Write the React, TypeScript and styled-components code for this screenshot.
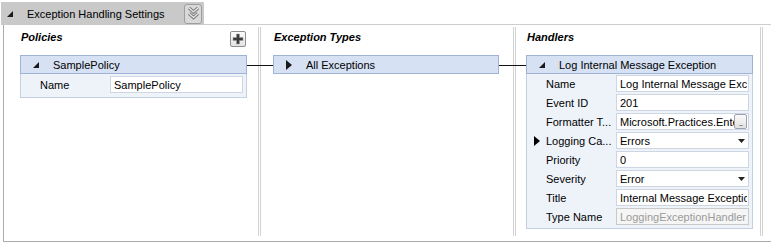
import type { FC, ReactNode } from 'react'
import styled, { createGlobalStyle } from 'styled-components'

const GlobalStyle = createGlobalStyle`
  html, body { margin: 0; padding: 0; background: #fff; }
  body {
    font-family: "Liberation Sans", Arial, sans-serif;
    font-size: 11px;
    color: #000;
  }
  * { box-sizing: border-box; }
`

interface HandlerRow {
  label: string
  value: string
  kind?: 'text' | 'combo' | 'picker' | 'readonly'
  selected?: boolean
}

const handlerRows: HandlerRow[] = [
  { label: 'Name', value: 'Log Internal Message Exception' },
  { label: 'Event ID', value: '201' },
  { label: 'Formatter T...', value: 'Microsoft.Practices.EnterpriseLibrary', kind: 'picker' },
  { label: 'Logging Ca...', value: 'Errors', kind: 'combo', selected: true },
  { label: 'Priority', value: '0' },
  { label: 'Severity', value: 'Error', kind: 'combo' },
  { label: 'Title', value: 'Internal Message Exception' },
  { label: 'Type Name', value: 'LoggingExceptionHandler', kind: 'readonly' },
]

const App: FC = () => {
  return (
    <Frame>
      <GlobalStyle />
      <TabStrip>
        <Tab>
          <ExpandedGlyph />
          <TabTitle>Exception Handling Settings</TabTitle>
          <ChevronButton>
            <svg width="13" height="15" viewBox="0 0 13 15">
              <path d="M2 2 L6.5 6 L11 2 M2 7.5 L6.5 11.5 L11 7.5" fill="none" stroke="#7c7c7c" strokeWidth="3.2" strokeLinejoin="miter" />
              <path d="M2 2 L6.5 6 L11 2 M2 7.5 L6.5 11.5 L11 7.5" fill="none" stroke="#ececec" strokeWidth="1.2" />
            </svg>
          </ChevronButton>
        </Tab>
        <TabRule />
      </TabStrip>

      <Panel>
        <Column $left={16} $right={11}>
          <ColumnHead>
            <span>Policies</span>
            <PlusButton>
              <svg width="12" height="12" viewBox="0 0 12 12">
                <path d="M4.5 1 H7.5 V4.5 H11 V7.5 H7.5 V11 H4.5 V7.5 H1 V4.5 H4.5 Z" fill="#3a3a3a" stroke="#9a9a9a" strokeWidth="0.6" />
              </svg>
            </PlusButton>
          </ColumnHead>
          <Card $link={26}>
            <CardHeader>
              <GlyphSlot><ExpandedGlyph /></GlyphSlot>
              SamplePolicy
            </CardHeader>
            <CardBody>
              <PropRow $h={21}>
                <PropLabel>
                  <MarkerSlot />
                  Name
                </PropLabel>
                <Field>SamplePolicy</Field>
              </PropRow>
            </CardBody>
          </Card>
        </Column>

        <Column $left={12} $right={14}>
          <ColumnHead>
            <span>Exception Types</span>
          </ColumnHead>
          <Card $link={27}>
            <CardHeader>
              <GlyphSlot><CollapsedGlyph /></GlyphSlot>
              All Exceptions
            </CardHeader>
          </Card>
        </Column>

        <Column $left={10} $right={7}>
          <ColumnHead>
            <span>Handlers</span>
          </ColumnHead>
          <Card>
            <CardHeader>
              <GlyphSlot><ExpandedGlyph /></GlyphSlot>
              Log Internal Message Exception
            </CardHeader>
            <CardBody>
              {handlerRows.map((row) => (
                <PropRow key={row.label} $h={19}>
                  <PropLabel>
                    <MarkerSlot>{row.selected && <RowMarker />}</MarkerSlot>
                    {row.label}
                  </PropLabel>
                  <HandlerField row={row} />
                </PropRow>
              ))}
            </CardBody>
          </Card>
        </Column>
      </Panel>
    </Frame>
  )
}

const HandlerField: FC<{ row: HandlerRow }> = ({ row }) => {
  let extra: ReactNode = null
  if (row.kind === 'combo') extra = <DropArrow />
  if (row.kind === 'picker') extra = <DotsButton>...</DotsButton>

  return (
    <Field $readonly={row.kind === 'readonly'}>
      <FieldText>{row.value}</FieldText>
      {extra}
    </Field>
  )
}

const ExpandedGlyph: FC = () => (
  <svg width="6" height="6" viewBox="0 0 6 6" style={{ display: 'block' }}>
    <polygon points="6,0 6,6 0,6" fill="#1a1a1a" />
  </svg>
)

const CollapsedGlyph: FC = () => (
  <svg width="6" height="10" viewBox="0 0 6 10" style={{ display: 'block' }}>
    <polygon points="0,0 6,5 0,10" fill="#1a1a1a" />
  </svg>
)

const RowMarker: FC = () => (
  <svg width="6" height="10" viewBox="0 0 6 10" style={{ display: 'block' }}>
    <polygon points="0,0 6,5 0,10" fill="#000" />
  </svg>
)

const DropArrow: FC = () => (
  <svg width="7" height="4" viewBox="0 0 7 4" style={{ display: 'block', marginRight: 2, flexShrink: 0 }}>
    <polygon points="0,0 7,0 3.5,4" fill="#222" />
  </svg>
)

const Frame = styled.div`
  width: 771px;
  height: 245px;
  padding-top: 2px;
  overflow: hidden;
`

const TabStrip = styled.div`
  display: flex;
  height: 23px;
`

const Tab = styled.div`
  width: 203px;
  margin-left: 1px;
  background: #c9c9c9;
  display: flex;
  align-items: center;
  padding-left: 6px;
`

const TabTitle = styled.span`
  margin-left: 14px;
  font-size: 11px;
`

const ChevronButton = styled.div`
  margin-left: auto;
  margin-right: 2px;
  width: 18px;
  height: 20px;
  border: 1px solid #9d9d9d;
  border-radius: 3px;
  background: #d9d9d9;
  display: flex;
  align-items: center;
  justify-content: center;
`

const TabRule = styled.div`
  flex: 1;
  border-bottom: 1px solid #cdcdcd;
`

const Panel = styled.div`
  margin-left: 3px;
  height: 217px;
  border-left: 1px solid #ababab;
  border-bottom: 1px solid #ababab;
  display: grid;
  grid-template-columns: 257px 255px 247px;
`

const Column = styled.div<{ $left: number; $right: number }>`
  margin: 2px 0 5px;
  padding: 0 ${(p) => p.$right}px 0 ${(p) => p.$left}px;
  border-right: 3px double #d2d2d2;
  display: flex;
  flex-direction: column;
`

const ColumnHead = styled.div`
  height: 28px;
  padding: 3px 0 0 1px;
  display: flex;
  justify-content: space-between;
  align-items: flex-start;
  line-height: 14px;
  font-weight: bold;
  font-style: italic;
`

const PlusButton = styled.div`
  margin-top: 1px;
  margin-right: 1px;
  width: 16px;
  height: 16px;
  border: 1px solid #8e8e8e;
  border-radius: 2px;
  background: linear-gradient(#fbfbfb, #e4e4e4);
  display: flex;
  align-items: center;
  justify-content: center;
`

const Card = styled.div<{ $link?: number }>`
  position: relative;
  &::after {
    content: "";
    display: ${(p) => (p.$link ? 'block' : 'none')};
    position: absolute;
    left: 100%;
    top: 10px;
    width: ${(p) => p.$link ?? 0}px;
    height: 1px;
    background: #111;
    z-index: 2;
  }
`

const CardHeader = styled.div`
  height: 19px;
  padding-left: 12px;
  border: 1px solid #9fb4d5;
  background: #d6e2f3;
  display: flex;
  align-items: center;
  white-space: nowrap;
`

const GlyphSlot = styled.span`
  width: 20px;
  display: flex;
  align-items: center;
`

const CardBody = styled.div`
  border: 1px solid #c4d0e1;
  border-top: none;
  background: #eef3fa;
  padding-bottom: 2px;
`

const PropRow = styled.div<{ $h: number }>`
  height: ${(p) => p.$h}px;
  display: grid;
  grid-template-columns: 89px minmax(0, 1fr);
  align-items: center;
  padding-right: 3px;
`

const PropLabel = styled.div`
  display: flex;
  align-items: center;
  white-space: nowrap;
  overflow: hidden;
`

const MarkerSlot = styled.span`
  width: 19px;
  padding-left: 7px;
  display: flex;
  align-items: center;
`

const Field = styled.div<{ $readonly?: boolean }>`
  height: 17px;
  padding: 0 1px 0 3px;
  border: 1px solid ${(p) => (p.$readonly ? '#c9c9c9' : '#cdd6e2')};
  background: ${(p) => (p.$readonly ? '#f5f5f5' : '#fff')};
  color: ${(p) => (p.$readonly ? '#9a9a9a' : '#000')};
  display: flex;
  align-items: center;
  white-space: nowrap;
  overflow: hidden;
`

const FieldText = styled.span`
  flex: 1;
  min-width: 0;
  overflow: hidden;
`

const DotsButton = styled.span`
  flex-shrink: 0;
  width: 13px;
  height: 15px;
  border: 1px solid #9aa3ad;
  border-radius: 2px;
  background: linear-gradient(#fafafa, #e2e2e2);
  font-size: 8px;
  line-height: 17px;
  text-align: center;
  letter-spacing: -1px;
  color: #333;
`

export default App
